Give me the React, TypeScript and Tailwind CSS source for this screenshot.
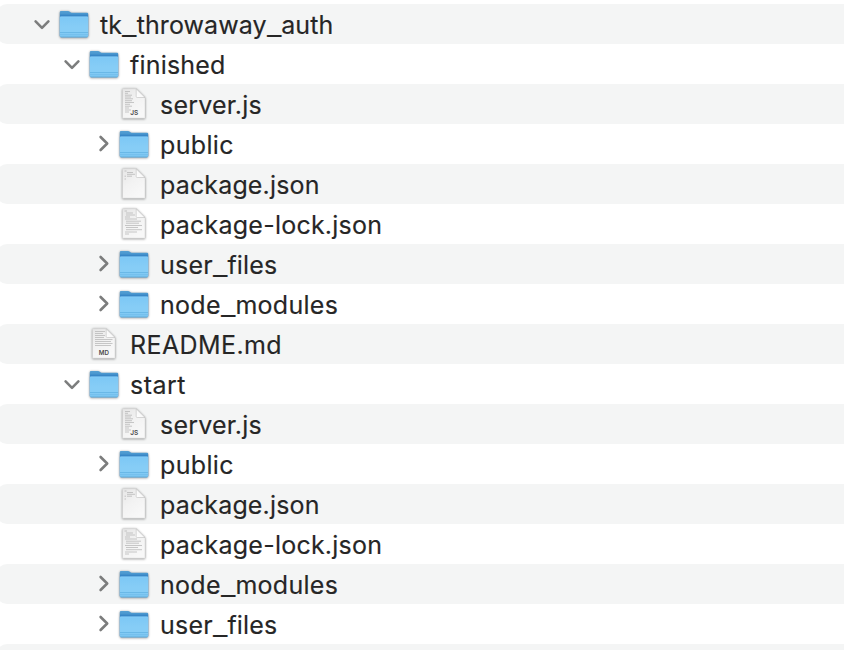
import React from 'react';

type Kind = 'folder' | 'js' | 'md' | 'short' | 'text';

interface Entry {
  name: string;
  kind: Kind;
  depth: number;
  open?: boolean;
}

const entries: Entry[] = [
  { name: 'tk_throwaway_auth', kind: 'folder', depth: 0, open: true },
  { name: 'finished', kind: 'folder', depth: 1, open: true },
  { name: 'server.js', kind: 'js', depth: 2 },
  { name: 'public', kind: 'folder', depth: 2 },
  { name: 'package.json', kind: 'short', depth: 2 },
  { name: 'package-lock.json', kind: 'text', depth: 2 },
  { name: 'user_files', kind: 'folder', depth: 2 },
  { name: 'node_modules', kind: 'folder', depth: 2 },
  { name: 'README.md', kind: 'md', depth: 1 },
  { name: 'start', kind: 'folder', depth: 1, open: true },
  { name: 'server.js', kind: 'js', depth: 2 },
  { name: 'public', kind: 'folder', depth: 2 },
  { name: 'package.json', kind: 'short', depth: 2 },
  { name: 'package-lock.json', kind: 'text', depth: 2 },
  { name: 'node_modules', kind: 'folder', depth: 2 },
  { name: 'user_files', kind: 'folder', depth: 2 },
];

const indents = ['pl-[27px]', 'pl-[57px]', 'pl-[87px]'];

// a few labels need a different tracking from the rest
const tracking: Record<string, string> = {
  tk_throwaway_auth: 'tracking-[0.1px]',
  node_modules: 'tracking-[0.27px]',
  'package-lock.json': 'tracking-[0.23px]',
  'README.md': 'tracking-[0.4px]',
  'package.json': 'tracking-[0.15px]',
  public: 'tracking-[0.35px]',
  start: 'tracking-[0.45px]',
};

const Gradients = () => (
  <svg className="absolute h-0 w-0" aria-hidden="true">
    <defs>
      <linearGradient id="folderBack" x1="0" y1="0" x2="0" y2="1">
        <stop offset="0" stopColor="#559fd3" />
        <stop offset="0.1" stopColor="#4a97cf" />
        <stop offset="0.2" stopColor="#317fc2" />
        <stop offset="1" stopColor="#317fc2" />
      </linearGradient>
      <linearGradient id="folderFront" x1="0" y1="0" x2="0" y2="1">
        <stop offset="0" stopColor="#7cc7f5" />
        <stop offset="0.5" stopColor="#86cdf6" />
        <stop offset="0.74" stopColor="#86cdf6" />
        <stop offset="1" stopColor="#78c3f0" />
      </linearGradient>
      <linearGradient id="paper" x1="0" y1="0" x2="0.6" y2="1">
        <stop offset="0" stopColor="#e6e6e6" />
        <stop offset="0.5" stopColor="#f2f2f2" />
        <stop offset="1" stopColor="#f8f8f8" />
      </linearGradient>
      <linearGradient id="fold" x1="0" y1="1" x2="1" y2="0">
        <stop offset="0" stopColor="#ffffff" />
        <stop offset="1" stopColor="#f0f0f0" />
      </linearGradient>
      <filter id="iconShadow" x="-20%" y="-20%" width="140%" height="140%" colorInterpolationFilters="sRGB">
        <feDropShadow dx="0" dy="0.5" stdDeviation="0.8" floodColor="#000" floodOpacity="0.45" />
      </filter>
    </defs>
  </svg>
);

const Chevron: React.FC<{ open?: boolean }> = ({ open }) => (
  <svg className="h-10 w-[30px] shrink-0" viewBox="0 0 30 40" fill="none" stroke="#7c7d7d" strokeWidth="2.6" strokeLinecap="round" strokeLinejoin="round">
    <path d={open ? 'M8.6 17.4L15 23.8L21.4 17.4' : 'M13.6 13L20.2 19.5L13.6 26'} />
  </svg>
);

const FolderIcon = () => (
  <svg className="h-10 w-[34px] shrink-0" viewBox="0 0 34 40">
    <g filter="url(#iconShadow)">
      <path d="M2.8 8.3Q2.8 7.1 4 7.1H11Q12 7.1 12.8 7.8L13.9 8.4Q14.5 8.8 15.5 8.8H30Q31.2 8.8 31.2 10V32.1Q31.2 33.2 30 33.2H4Q2.8 33.2 2.8 32.1Z" fill="url(#folderBack)" />
      <path d="M2.8 13.5Q2.8 12.5 3.8 12.5H30.2Q31.2 12.5 31.2 13.5V32.1Q31.2 33.2 30 33.2H4Q2.8 33.2 2.8 32.1Z" fill="url(#folderFront)" />
    </g>
    <path d="M3.4 13H30.6" stroke="#8dd1f8" strokeWidth="0.6" />
    <path d="M3 28.5H31" stroke="#62b2e3" strokeWidth="0.8" />
    <path d="M3 30.5H31" stroke="#6fbbe9" strokeWidth="0.6" />
    <path d="M3.5 32.8H30.5" stroke="#62acd8" strokeWidth="0.6" />
  </svg>
);

const lines: Record<string, string> = {
  js: 'M8 7.5H13M8 9.3H11M8 11.2H15M8 13H14M8 14.8H16M8 16.7H15M8 18.5H17M8 20.3H13M8 22.2H15M8 24H12M8 26H14M8 28H12',
  md: 'M8 7.5H18M8 9.5H16M8 11.5H18M8 13.5H17M8 15.5H25.5M8 17.5H24M8 19.5H25.5M8 21.5H24',
  short: 'M7.5 7H9.5M10 8.5H16M10 10.3H18M7.5 12.2H9M10 12.2H15M7.5 15H9',
  text: 'M7.5 7H10M9 9H16M9 11H18M8 13H13M8 15H20M9 17.2H24M9 19.2H22M8 21.5H25M9 23.5H21M9 25.7H25M8 28H20M8 30H12',
};

const FileIcon: React.FC<{ kind: Kind }> = ({ kind }) => (
  <svg className="h-10 w-[34px] shrink-0" viewBox="0 0 34 40">
    <path d="M5.5 5.2Q5.5 4.8 6 4.8H19.2L28 13.5V33.7Q28 34.2 27.5 34.2H6Q5.5 34.2 5.5 33.7Z" fill="url(#paper)" stroke="#d0d0d0" strokeWidth="0.5" filter="url(#iconShadow)" />
    <path d={lines[kind]} stroke="#b2b2b2" strokeWidth="0.7" />
    <path d="M19.2 4.8V12.5Q19.2 13.5 20.2 13.5H28Z" fill="url(#fold)" stroke="#bebebe" strokeWidth="0.6" />
    {kind === 'js' && (
      <text x="17.3" y="31" textAnchor="middle" fontSize="6.5" fontWeight="600" fontFamily="Inter, sans-serif" fill="#4a4a4a">JS</text>
    )}
    {kind === 'md' && (
      <text x="16.9" y="31" textAnchor="middle" fontSize="6.2" fontWeight="600" fontFamily="Inter, sans-serif" fill="#4a4a4a">MD</text>
    )}
  </svg>
);

// underscores are drawn wider and a little lower than the font has them
const Label: React.FC<{ name: string }> = ({ name }) => (
  <span className={`ml-[9px] pt-px whitespace-nowrap text-[25px] leading-[41px] text-[#262626] [-webkit-text-stroke:0.15px_#262626] ${tracking[name] ?? 'tracking-[0.2px]'}`}>
    {name.split(/(_)/).map((part, i) =>
      part === '_' ? (
        <span key={i} className="mr-[3px] inline-block origin-left translate-y-px scale-x-[1.27]">_</span>
      ) : (
        part
      )
    )}
  </span>
);

const Row: React.FC<{ entry: Entry; striped: boolean }> = ({ entry, striped }) => (
  <li className={`relative flex h-10 shrink-0 items-start ${indents[entry.depth]}`}>
    {striped && <div className="absolute inset-y-0 -left-[3px] right-0 rounded-l-[10px] bg-[#f4f5f5]" />}
    <div className="relative flex items-start">
      {entry.kind === 'folder' ? <Chevron open={entry.open} /> : <div className="w-[30px]" />}
      {entry.kind === 'folder' ? <FolderIcon /> : <FileIcon kind={entry.kind} />}
      <Label name={entry.name} />
    </div>
  </li>
);

const App: React.FC = () => (
  <div className="h-[650px] w-[844px] overflow-hidden bg-white pt-1 font-['Inter',sans-serif]">
    <Gradients />
    <ul className="flex flex-col">
      {entries.map((entry, i) => (
        <Row key={i} entry={entry} striped={i % 2 === 0} />
      ))}
      <li className="-ml-[3px] h-10 shrink-0 rounded-l-[10px] bg-[#f4f5f5]" />
    </ul>
  </div>
);

export default App;
